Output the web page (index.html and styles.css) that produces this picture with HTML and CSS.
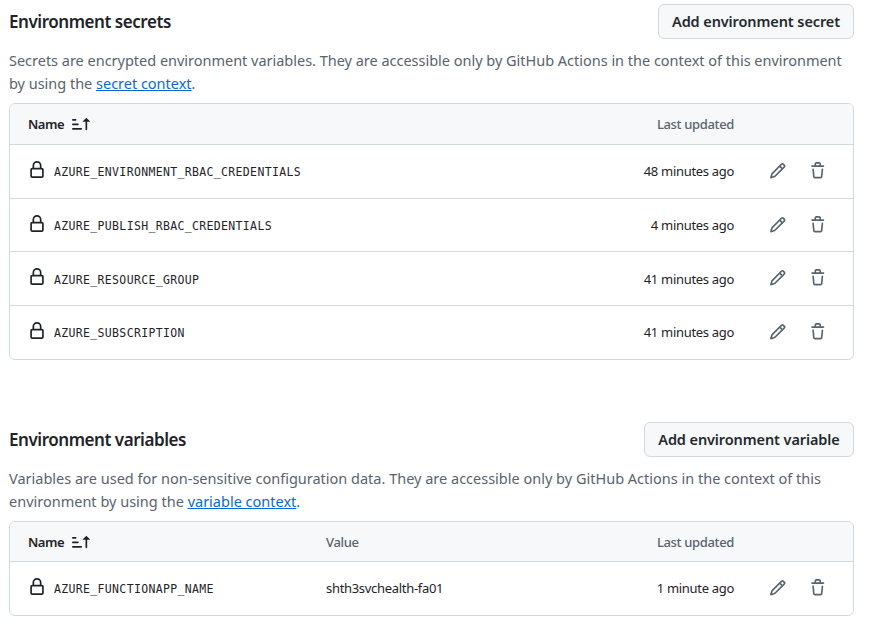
FILE: index.html
```html
<!DOCTYPE html>
<html lang="en">
<head>
<meta charset="utf-8">
<title>Environment secrets and variables</title>
<link rel="stylesheet" href="styles.css">
</head>
<body>
<svg class="sprite" aria-hidden="true">
  <symbol id="lock" viewBox="0 0 16 16"><path d="M4 4a4 4 0 0 1 8 0v2h.25c.966 0 1.75.784 1.75 1.75v5.5A1.75 1.75 0 0 1 12.25 15h-8.5A1.75 1.75 0 0 1 2 13.250v-5.5C2 6.784 2.784 6 3.750 6H4Zm8.250 3.500h-8.500a.25.25 0 0 0-.25.25v5.500c0 .138.112.25.25.25h8.500a.25.25 0 0 0 .25-.25v-5.500a.25.25 0 0 0-.25-.25ZM10.500 6V4a2.500 2.500 0 1 0-5 0v2Z"/></symbol>
  <symbol id="pencil" viewBox="0 0 16 16"><path d="M11.013 1.427a1.750 1.750 0 0 1 2.474 0l1.086 1.086a1.750 1.750 0 0 1 0 2.474l-8.610 8.610c-.21.21-.47.364-.756.445l-3.251.93a.75.75 0 0 1-.927-.928l.929-3.250c.081-.286.235-.547.445-.758l8.610-8.610Zm.176 4.823L9.750 4.810l-6.286 6.287a.253.253 0 0 0-.064.108l-.558 1.953 1.953-.558a.253.253 0 0 0 .108-.064Zm1.238-3.763a.25.25 0 0 0-.354 0L10.811 3.750l1.439 1.440 1.263-1.263a.25.25 0 0 0 0-.354Z"/></symbol>
  <symbol id="trash" viewBox="0 0 16 16"><path d="M11 1.750V3h2.250a.75.75 0 0 1 0 1.500H2.750a.75.75 0 0 1 0-1.500H5V1.750C5 .784 5.784 0 6.750 0h2.500C10.216 0 11 .784 11 1.750ZM4.496 6.675l.66 6.600a.25.25 0 0 0 .249.225h5.190a.25.25 0 0 0 .249-.225l.66-6.600a.75.75 0 0 1 1.492.149l-.66 6.600A1.748 1.748 0 0 1 10.595 15h-5.190a1.750 1.750 0 0 1-1.741-1.575l-.66-6.600a.75.75 0 1 1 1.492-.15ZM6.500 1.750V3h3V1.750a.25.25 0 0 0-.25-.25h-2.500a.25.25 0 0 0-.25.25Z"/></symbol>
  <symbol id="sort" viewBox="0 0 16 16"><path d="m12.927 2.573 3 3A.25.25 0 0 1 15.750 6H13.500v6.750a.75.75 0 0 1-1.500 0V6H9.750a.25.25 0 0 1-.177-.427l3-3a.25.25 0 0 1 .354 0ZM0 12.250a.75.75 0 0 1 .75-.75h7.500a.75.75 0 0 1 0 1.500H.750a.75.75 0 0 1-.75-.75Zm0-4a.75.75 0 0 1 .75-.75h4.500a.75.75 0 0 1 0 1.500H.750A.75.75 0 0 1 0 8.250Zm0-4a.75.75 0 0 1 .75-.75h2.500a.75.75 0 0 1 0 1.500H.750A.75.75 0 0 1 0 4.250Z"/></symbol>
</svg>
<main>
  <section>
    <header class="heading"><h2>Environment secrets</h2><button type="button" class="btn-secret">Add environment secret</button></header>
    <p>Secrets are encrypted environment variables. They are accessible only by GitHub Actions in the context of this environment<br>by using the <a href="#">secret context</a>.</p>
    <div class="table">
      <div class="row head"><span class="name">Name <svg class="sort"><use href="#sort"/></svg></span><span></span><span class="time">Last updated</span></div>
      <div class="row"><span class="name"><svg class="lock"><use href="#lock"/></svg><code>AZURE_ENVIRONMENT_RBAC_CREDENTIALS</code></span><span></span><span class="time">48 minutes ago</span><svg class="act"><use href="#pencil"/></svg><svg class="act"><use href="#trash"/></svg></div>
      <div class="row"><span class="name"><svg class="lock"><use href="#lock"/></svg><code>AZURE_PUBLISH_RBAC_CREDENTIALS</code></span><span></span><span class="time">4 minutes ago</span><svg class="act"><use href="#pencil"/></svg><svg class="act"><use href="#trash"/></svg></div>
      <div class="row"><span class="name"><svg class="lock"><use href="#lock"/></svg><code>AZURE_RESOURCE_GROUP</code></span><span></span><span class="time">41 minutes ago</span><svg class="act"><use href="#pencil"/></svg><svg class="act"><use href="#trash"/></svg></div>
      <div class="row"><span class="name"><svg class="lock"><use href="#lock"/></svg><code>AZURE_SUBSCRIPTION</code></span><span></span><span class="time">41 minutes ago</span><svg class="act"><use href="#pencil"/></svg><svg class="act"><use href="#trash"/></svg></div>
    </div>
  </section>
  <section>
    <header class="heading"><h2>Environment variables</h2><button type="button" class="btn-variable">Add environment variable</button></header>
    <p class="variables-note">Variables are used for non-sensitive configuration data. They are accessible only by GitHub Actions in the context of this<br>environment by using the <a href="#">variable context</a>.</p>
    <div class="table values">
      <div class="row head"><span class="name">Name <svg class="sort"><use href="#sort"/></svg></span><span>Value</span><span class="time">Last updated</span></div>
      <div class="row"><span class="name"><svg class="lock"><use href="#lock"/></svg><code>AZURE_FUNCTIONAPP_NAME</code></span><span>shth3svchealth-fa01</span><span class="time">1 minute ago</span><svg class="act"><use href="#pencil"/></svg><svg class="act"><use href="#trash"/></svg></div>
    </div>
  </section>
</main>
</body>
</html>
```
FILE: styles.css
```css
* { box-sizing: border-box; }
body { margin: 0; background: #fff; color: #1f2328; font: 13px/20px "Noto Sans", sans-serif; letter-spacing: -0.31px; }
.sprite { position: absolute; width: 0; height: 0; }
svg { fill: currentColor; flex: none; }
main { width: 845px; margin: 4px 0 0 9px; }
section + section { margin-top: 62.35px; }
.heading { display: flex; justify-content: space-between; align-items: center; height: 35px; }
h2 { margin: 0; font-size: 17px; line-height: 24px; font-weight: 600; letter-spacing: -0.45px; white-space: nowrap; }
button { height: 35px; padding: 0 0 1px; border: 1px solid #d1d9e0; border-radius: 6px; background: #f6f8fa; color: #25292e; font: 600 14.5px/20px "Noto Sans", sans-serif; letter-spacing: -0.1px; white-space: nowrap; }
.btn-secret { width: 196px; }
.btn-variable { width: 210px; }
p { margin: 10px 0 8px; height: 46px; font-size: 14.5px; line-height: 23px; letter-spacing: -0.015px; color: #59636e; white-space: nowrap; }
.variables-note { letter-spacing: 0; }
a { color: #0969da; text-decoration: underline; }
.table { border: 1px solid #d1d9e0; border-radius: 6px; overflow: hidden; }
.row { display: grid; grid-template-columns: 298px 280px 128px 52.5px 40px; align-items: center; height: 53.7px; padding-left: 18px; border-top: 1px solid #d1d9e0; }
.head { height: 40px; border-top: 0; background: #f6f8fa; color: #59636e; font-weight: 500; letter-spacing: -0.35px; }
.values .head { height: 39px; }
.head .name { color: #1f2328; font-weight: 600; letter-spacing: -0.5px; }
.name { display: flex; align-items: center; white-space: nowrap; }
.time { text-align: right; white-space: nowrap; }
.sort { width: 18px; height: 18px; margin-left: 8px; }
.lock { width: 18px; height: 18px; margin: 0 8px 3px 0; }
.act { width: 17.5px; height: 17.5px; margin-bottom: 1px; justify-self: end; color: #59636e; }
code { padding-top: 2px; font: 11.5px/20px "DejaVu Sans Mono", monospace; letter-spacing: 0.34px; }
```
